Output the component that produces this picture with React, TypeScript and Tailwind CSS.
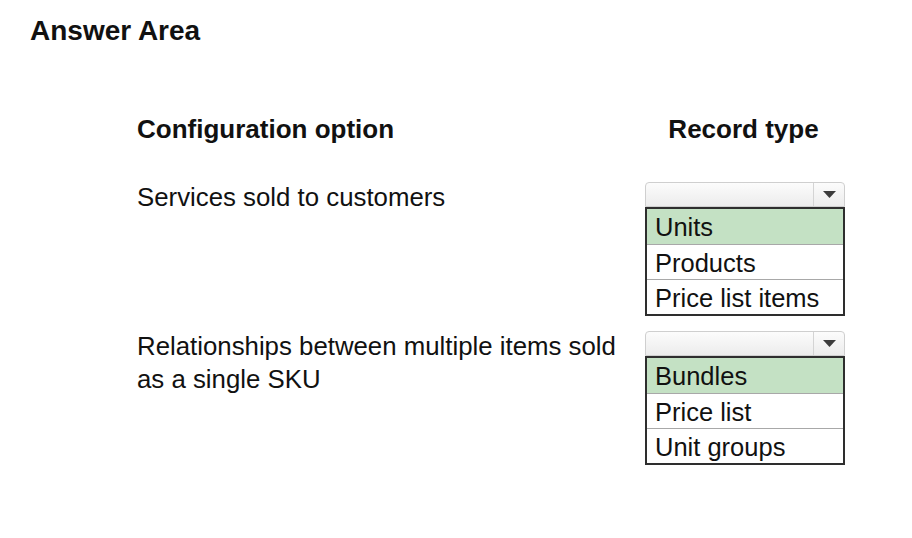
import React from "react";

type Option = { label: string; selected?: boolean };

const rows: { text: string; options: Option[] }[] = [
  {
    text: "Services sold to customers",
    options: [
      { label: "Units", selected: true },
      { label: "Products" },
      { label: "Price list items" },
    ],
  },
  {
    text: "Relationships between multiple items sold as a single SKU",
    options: [
      { label: "Bundles", selected: true },
      { label: "Price list" },
      { label: "Unit groups" },
    ],
  },
];

function Dropdown({ options }: { options: Option[] }) {
  return (
    <div className="w-[200px]">
      {/* closed select */}
      <div className="h-[25px] flex border border-[#cfcfcf] rounded-t-[4px] bg-gradient-to-b from-[#fcfcfc] to-[#ececec]">
        <div className="flex-1" />
        <div className="w-[31px] border-l border-[#d4d4d4] flex items-center justify-center">
          <svg width="13" height="7" viewBox="0 0 13 7">
            <path d="M0 0 H13 L6.5 7 Z" fill="#3c3c3c" />
          </svg>
        </div>
      </div>
      {/* open list */}
      <div className="border-2 border-[#2e2e2e] bg-white">
        {options.map((o, i) => (
          <div
            key={o.label}
            className={`h-[35px] pl-[8px] text-[25.5px] leading-[36px] ${
              i > 0 ? "border-t border-[#a8a8a8]" : ""
            } ${o.selected ? "bg-[#c4e1c4]" : ""}`}
          >
            {o.label}
          </div>
        ))}
      </div>
    </div>
  );
}

export default function App() {
  return (
    <div className="w-[912px] h-[538px] bg-white text-[#111] font-['Liberation_Sans',Arial,sans-serif]">
      <h1 className="pl-[30px] pt-[15px] text-[28px] leading-[32px] font-bold">
        Answer Area
      </h1>

      <div className="ml-[137px] mt-[67px] grid grid-cols-[508px_200px] gap-y-[15px]">
        <div className="text-[26px] leading-[30px] font-bold">
          Configuration option
        </div>
        <div className="text-[26px] leading-[30px] font-bold text-center pr-[3px]">
          Record type
        </div>

        {rows.map((r, i) => (
          <React.Fragment key={i}>
            <div
              className={`w-[490px] text-[25.8px] leading-[33px] ${
                i === 0 ? "mt-[22px]" : "-mt-[1px]"
              }`}
            >
              {r.text}
            </div>
            <div className={i === 0 ? "mt-[23px]" : ""}>
              <Dropdown options={r.options} />
            </div>
          </React.Fragment>
        ))}
      </div>
    </div>
  );
}
